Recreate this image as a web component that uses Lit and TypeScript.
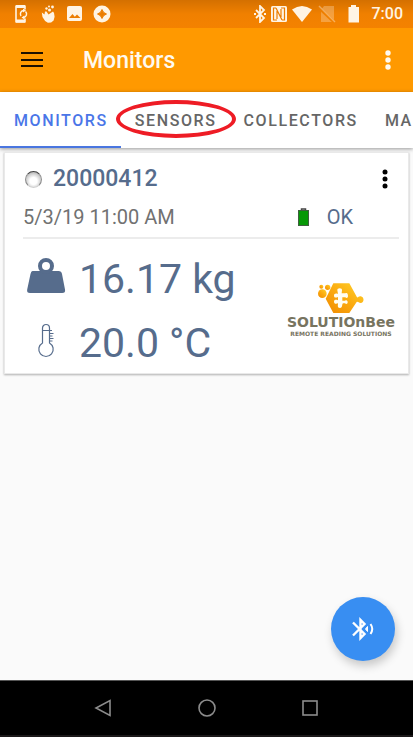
import { LitElement, html, css } from "lit";
import { customElement, property, state } from "lit/decorators.js";
import { classMap } from "lit/directives/class-map.js";

const TABS = ["Monitors", "Sensors", "Collectors", "Ma"];

const buttonReset = css`
  * {
    box-sizing: border-box;
  }
  button {
    border: 0;
    padding: 0;
    margin: 0;
    background: none;
    color: inherit;
    font: inherit;
    cursor: pointer;
  }
  svg {
    display: block;
    flex: none;
  }
`;

@customElement("status-bar")
export class StatusBar extends LitElement {
  static styles = [
    buttonReset,
    css`
      :host {
        display: flex;
        align-items: center;
        justify-content: space-between;
        height: 28px;
        padding: 0 10px 0 12px;
        background: linear-gradient(#d47000, #f08000 50%, #f48200);
        color: #fff4e4;
      }
      .group {
        display: flex;
        align-items: center;
        gap: 9px;
      }
      .system {
        gap: 4px;
      }
      .time {
        padding-left: 4px;
        font-size: 16px;
        font-weight: 500;
        line-height: 28px;
      }
    `,
  ];

  render() {
    return html`
      <div class="group">
        <svg width="18" height="20" viewBox="0 0 18 20" fill="none" stroke="currentColor">
          <path d="M13 5.500V2H4v16h9v-3.500" stroke-width="1.600" stroke-linejoin="round" />
          <path d="M4 2.500h9M4 17h9" stroke-width="2.800" />
          <path d="M9 12a3.500 3.500 0 0 1 2.500-5.500M13.500 7.500a3.500 3.500 0 0 1-2 6" stroke-width="1.500" />
          <path d="M11 4.500v4l3-2zM12.500 11.500v4l-3-2z" fill="currentColor" stroke="none" />
        </svg>
        <svg width="18" height="20" viewBox="0 0 18 20" fill="currentColor">
          <path d="M2.800 8.500l2.700 2 .5-3 1.500 0 2 3 4.500-3 1 1.500.6 3.700-1 3.800-2.500 2-3.200.2-2.800-1.800-2.600-4z" />
          <circle cx="7.500" cy="4.500" r="1.200" />
          <circle cx="10.500" cy="6" r="1.500" />
          <circle cx="13.500" cy="3" r="1.400" />
          <circle cx="10" cy="2.500" r="1" />
        </svg>
        <svg width="18" height="20" viewBox="0 0 18 20">
          <rect x="1" y="2" width="15" height="15" rx="2" fill="currentColor" />
          <path d="M3 14l3.500-4 2.300 2.700L11 10.500l3.500 3.500z" fill="#ec7d00" />
        </svg>
        <svg width="18" height="20" viewBox="0 0 18 20">
          <circle cx="9" cy="10" r="8.500" fill="currentColor" />
          <path d="M9 5.500Q10 9 13.500 10 10 11 9 14.500 8 11 4.500 10 8 9 9 5.500z" fill="#ec7d00" stroke="#ec7d00" />
        </svg>
      </div>
      <div class="group system">
        <svg width="12" height="18" viewBox="0 0 12 18" fill="none" stroke="currentColor" stroke-width="1.800">
          <path d="M2 5l8 8-4 4V1l4 4-8 8" />
          <path d="M0 9h2M10 9h2" />
        </svg>
        <svg width="18" height="18" viewBox="0 0 18 18" fill="none">
          <rect x="1" y="1" width="16" height="16" rx="1.500" fill="currentColor" />
          <path d="M7 15H3.500V3H6M11 3h3.500v12H12" stroke="#ec7d00" stroke-width="1.200" />
          <path d="M7 14V6M6 3l6 12M11 4v8" stroke="#ec7d00" stroke-width="1.200" />
        </svg>
        <svg width="20" height="18" viewBox="0 0 20 18" fill="currentColor">
          <path d="M10 17L0 4.500Q10-2.500 20 4.500z" />
        </svg>
        <svg width="22" height="18" viewBox="0 0 22 18" opacity=".4">
          <path d="M8 1h10v16H5V5z" fill="currentColor" opacity=".7" />
          <path d="M2 2l16 15" stroke="#f08000" stroke-width="3" />
          <path d="M3 1l16 16" stroke="currentColor" stroke-width="1.500" />
        </svg>
        <svg width="22" height="18" viewBox="0 0 22 18" fill="currentColor">
          <path d="M9 0h5v2h3v15.500H6.500V2H9z" />
        </svg>
        <span class="time">7:00</span>
      </div>
    `;
  }
}

@customElement("solution-logo")
export class SolutionLogo extends LitElement {
  static styles = css`
    :host {
      display: flex;
      flex-direction: column;
      align-items: center;
      font-family: "DejaVu Sans", sans-serif;
      font-weight: 700;
      white-space: nowrap;
      color: #77745f;
    }
    svg {
      display: block;
    }
    .name {
      font-size: 14px;
      line-height: 16px;
    }
    .tagline {
      font-size: 6px;
      line-height: 7px;
    }
  `;

  render() {
    return html`
      <svg width="49" height="32" viewBox="141 35 147 96">
        <defs>
          <linearGradient id="amber" x1="0" y1="1" x2="1" y2="0">
            <stop offset="0" stop-color="#f08a00" />
            <stop offset=".5" stop-color="#fbab10" />
            <stop offset="1" stop-color="#ffd42c" />
          </linearGradient>
        </defs>
        <g fill="url(#amber)">
          <circle cx="160" cy="70" r="13" />
          <circle cx="157" cy="49" r="6" />
          <circle cx="176" cy="51" r="8" />
          <path d="M193 39h48l23 42c4 2 4-4 11-3 12 2 11 20 0 20-6 0-8-5-12-3l-22 33h-48l-23-43z" />
        </g>
        <path
          d="M205 60c-2-8 16-9 14 0l-1 9h11c6-4 8 3 8 8s-4 8-8 4h-9v10h8c6-3 8 1 8 5s-4 7-8 3h-6c-4 2 0 14-9 14s-6-9-6-14c-8 3-12 0-12-5s4-7 12-4V80c-8 4-12 1-12-4s4-8 12-5z"
          fill="#fffdf2"
        />
      </svg>
      <span class="name">SOLUTIOnBee</span>
      <span class="tagline">REMOTE READING SOLUTIONS</span>
    `;
  }
}

@customElement("monitor-card")
export class MonitorCard extends LitElement {
  @property() name = "";
  @property() time = "";
  @property() status = "";
  @property() weight = "";
  @property() temperature = "";

  static styles = [
    buttonReset,
    css`
      :host {
        display: block;
        padding: 8px 9px 0 18px;
        border: 1px solid #e9e9e9;
        background: #fff;
        box-shadow: 0 1px 2px rgba(0, 0, 0, 0.3);
        color: #566c8c;
      }
      .head,
      .info {
        display: flex;
        align-items: center;
      }
      .head {
        height: 36px;
        gap: 11px;
      }
      .led {
        width: 17px;
        height: 17px;
        margin-left: 2px;
        border-radius: 50%;
        border: 1px solid #8d8d8d;
        border-top-color: #444;
        border-bottom-color: #cfcfcf;
        background: radial-gradient(circle at 50% 60%, #fff 30%, #d2d2d2 60%, #8e8e8e);
      }
      .name {
        flex: 1;
        margin: 0;
        font-size: 23px;
        font-weight: 500;
        line-height: 32px;
      }
      .more {
        display: grid;
        place-items: center;
        width: 28px;
        height: 36px;
        color: #000;
      }
      .info {
        height: 42px;
        border-bottom: 2px solid #ececec;
        font-size: 20px;
      }
      .time {
        flex: 1;
        color: #717171;
      }
      .status {
        display: flex;
        align-items: center;
        gap: 18px;
        padding-right: 46px;
      }
      .body {
        display: flex;
        justify-content: space-between;
        padding: 6px 4px 0 0;
      }
      .reading {
        display: flex;
        align-items: center;
        gap: 11px;
        height: 64px;
        font-size: 41px;
        white-space: nowrap;
      }
      .reading svg {
        margin-bottom: 2px;
      }
      .reading span {
        padding-top: 4px;
        line-height: 60px;
      }
      .logo {
        padding-top: 37px;
      }
    `,
  ];

  render() {
    return html`
      <div class="head">
        <span class="led"></span>
        <h2 class="name">${this.name}</h2>
        <button class="more" aria-label="Monitor options">
          <svg width="6" height="20" viewBox="0 0 6 20" fill="currentColor">
            <circle cx="3" cy="3" r="2.500" />
            <circle cx="3" cy="10" r="2.500" />
            <circle cx="3" cy="17" r="2.500" />
          </svg>
        </button>
      </div>
      <div class="info">
        <span class="time">${this.time}</span>
        <span class="status">
          <svg width="11" height="18" viewBox="0 0 11 18">
            <path d="M3.500 2.500V1h4v1.500" fill="none" stroke="#444" stroke-width="1.500" />
            <rect x=".5" y="2.500" width="10" height="15" fill="#069806" stroke="#3f5f3f" />
          </svg>
          ${this.status}
        </span>
      </div>
      <div class="body">
        <div>
          <div class="reading">
            <svg width="45" height="40" viewBox="0 0 45 40" fill="currentColor">
              <path d="M9.500 15h26q3 0 3.500 3l3 15.500q.7 3.500-2.800 3.500H7q-3.500 0-2.800-3.500L7.500 18q.6-3 2-3z" />
              <circle cx="23" cy="10" r="6" fill="none" stroke="currentColor" stroke-width="4" />
            </svg>
            <span>${this.weight}</span>
          </div>
          <div class="reading">
            <svg width="45" height="36" viewBox="0 2 45 36" fill="none" stroke="currentColor">
              <path d="M19.500 23V8a3.500 3.500 0 0 1 7 0v15a7.200 7.200 0 1 1-7 0z" stroke-width="1.200" />
              <path d="M20 10.500h9M26.500 13.500h4M26.500 16h3M26.500 18.500h4M26.500 21h3" stroke-width="1" />
            </svg>
            <span>${this.temperature}</span>
          </div>
        </div>
        <solution-logo class="logo"></solution-logo>
      </div>
    `;
  }
}

@customElement("app-root")
export class AppRoot extends LitElement {
  @state() private active = 0;

  static styles = [
    buttonReset,
    css`
      :host {
        display: flex;
        flex-direction: column;
        min-height: 100vh;
        overflow: hidden;
        background: #fafafa;
        font-family: Roboto, sans-serif;
      }
      .bar {
        display: flex;
        align-items: center;
        height: 64px;
        padding: 0 13px 0 18px;
        background: #ff9900;
        color: #fffaf0;
      }
      .menu {
        display: grid;
        place-items: center;
        width: 28px;
        height: 40px;
      }
      .title {
        flex: 1;
        margin: 0;
        padding-left: 37px;
        font-size: 23px;
        font-weight: 500;
      }
      .more {
        display: grid;
        place-items: center;
        width: 24px;
        height: 40px;
      }
      .tabs {
        position: relative;
        display: flex;
        height: 56px;
        background: #fff;
        box-shadow: 0 1px 4px rgba(0, 0, 0, 0.4);
      }
      .tab {
        position: relative;
        flex: none;
        padding: 2px 13px 0 14px;
        border-bottom: 2px solid transparent;
        color: #666;
        font-size: 16px;
        font-weight: 500;
        letter-spacing: 0.1em;
        text-transform: uppercase;
      }
      .tab.active {
        border-bottom-color: #4a76e0;
        color: #4a76e8;
      }
      .mark {
        position: absolute;
        top: 8px;
        left: -5px;
        width: 120px;
        height: 38px;
        border: 4px solid #ee1c25;
        border-radius: 50%;
        pointer-events: none;
      }
      .content {
        position: relative;
        flex: 1;
        padding: 4px;
      }
      .fab {
        position: absolute;
        right: 18px;
        bottom: 19px;
        display: grid;
        place-items: center;
        width: 64px;
        height: 64px;
        border-radius: 50%;
        background: #388ef2;
        color: #fff;
        box-shadow: 2px 5px 10px rgba(0, 0, 0, 0.2);
      }
      .nav {
        display: grid;
        grid-template-columns: repeat(3, 1fr);
        height: 57px;
        padding: 0 12.5%;
        border-top: 1px solid #555;
        border-bottom: 2px solid #1b1819;
        background: #000;
        color: #8c8c8c;
      }
      .nav button {
        display: grid;
        place-items: center;
      }
    `,
  ];

  render() {
    return html`
      <status-bar></status-bar>
      <header class="bar">
        <button class="menu" aria-label="Menu">
          <svg width="22" height="16" viewBox="0 0 22 16" fill="#1c1000">
            <path d="M0 0h22v2H0zM0 7h22v2H0zM0 13h22v2H0z" />
          </svg>
        </button>
        <h1 class="title">Monitors</h1>
        <button class="more" aria-label="More options">
          <svg width="6" height="20" viewBox="0 0 6 20" fill="currentColor">
            <circle cx="3" cy="3" r="2.700" />
            <circle cx="3" cy="10" r="2.700" />
            <circle cx="3" cy="17" r="2.700" />
          </svg>
        </button>
      </header>
      <nav class="tabs">
        ${TABS.map(
          (label, i) => html`
            <button class=${classMap({ tab: true, active: i === this.active })} @click=${() => (this.active = i)}>
              ${label}${label === "Sensors" ? html`<span class="mark"></span>` : null}
            </button>
          `
        )}
      </nav>
      <main class="content">
        <monitor-card
          name="20000412"
          time="5/3/19 11:00 AM"
          status="OK"
          weight="16.17 kg"
          temperature="20.0 °C"
        ></monitor-card>
        <button class="fab" aria-label="Scan for Bluetooth devices">
          <svg width="24" height="26" viewBox="0 0 24 26" fill="none" stroke="currentColor" stroke-width="2.400">
            <path d="M2 6.500l11.500 11.500-4 4v-18L13.500 8 2 19.500" />
            <path d="M14.500 13l2-2.500v5z" fill="currentColor" stroke-width="1" />
            <path d="M19.500 8q3.500 5 0 10" stroke-width="2" />
          </svg>
        </button>
      </main>
      <footer class="nav">
        <button aria-label="Back">
          <svg width="18" height="18" viewBox="0 0 18 18" fill="none" stroke="currentColor" stroke-width="1.600">
            <path d="M16 1.500v15L2 9z" />
          </svg>
        </button>
        <button aria-label="Home">
          <svg width="18" height="18" viewBox="0 0 18 18" fill="none" stroke="currentColor" stroke-width="1.600">
            <circle cx="9" cy="9" r="8" />
          </svg>
        </button>
        <button aria-label="Recent apps">
          <svg width="18" height="18" viewBox="0 0 18 18" fill="none" stroke="currentColor" stroke-width="1.600">
            <rect x="2" y="2" width="14" height="14" />
          </svg>
        </button>
      </footer>
    `;
  }
}
